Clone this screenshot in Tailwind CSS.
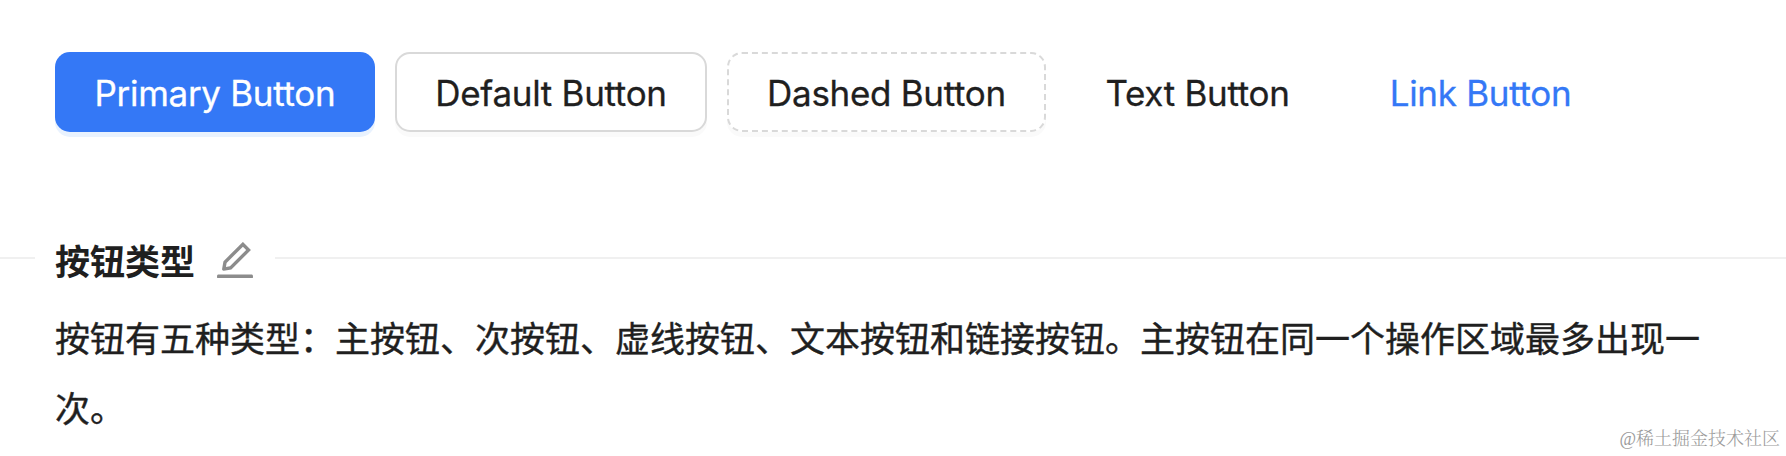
<!DOCTYPE html>
<html lang="zh-CN">
<head>
<meta charset="utf-8">
<title>按钮类型</title>
<script src="https://cdn.jsdelivr.net/npm/@tailwindcss/browser@4"></script>
</head>
<body class="relative h-[456px] overflow-hidden bg-white font-['Inter','Noto_Sans_CJK_SC',sans-serif] text-[35px] text-[#1f1f1f]">
  <div class="flex gap-5 pl-[55px] pt-[52px] whitespace-nowrap leading-[80px] tracking-[-0.3px] [-webkit-text-stroke:0.3px_currentColor]">
    <button class="flex h-20 w-80 items-center justify-center rounded-[15px] bg-[#3478f6] pt-[2px] text-white shadow-[0_5px_0_#e9f2fe]">Primary Button</button>
    <button class="flex h-20 w-[312px] items-center justify-center rounded-[15px] border-2 border-[#d9d9d9] bg-white pt-[2px] shadow-[0_5px_0_#fafafa]">Default Button</button>
    <button class="flex h-20 w-[319px] items-center justify-center rounded-[15px] border-2 border-dashed border-[#d9d9d9] bg-white pt-[2px] shadow-[0_5px_0_#fafafa]">Dashed Button</button>
    <button class="flex h-20 w-[263px] items-center justify-center pt-[2px]">Text Button</button>
    <button class="flex h-20 w-[263px] items-center justify-center pt-[2px] text-[#3478f6]">Link Button</button>
  </div>
  <div class="mt-[98px] flex h-[55px] items-start">
    <div class="mt-[27px] h-[2px] w-[35px] bg-[#f0f0f0]"></div>
    <h2 class="ml-5 mt-[5px] w-[140px] whitespace-nowrap font-bold leading-[55px]">按钮类型</h2>
    <svg class="ml-[17px] mt-[7px] size-[46px] shrink-0" viewBox="0 0 1024 1024" fill="#8c8c8c"><path d="M257.7 752c2 0 4-.2 6-.5L431.9 722c2-.4 3.9-1.3 5.3-2.8l423.9-423.9a9.96 9.96 0 000-14.1L694.9 114.9c-1.9-1.9-4.4-2.9-7.1-2.9s-5.2 1-7.1 2.9L256.8 538.8c-1.5 1.5-2.4 3.3-2.8 5.3l-29.5 168.2a33.5 33.5 0 009.4 29.8c6.6 6.4 14.9 9.9 23.8 9.9zm67.4-174.4L687.8 215l73.3 73.3-362.7 362.6-88.9 15.7 15.6-89zM880 836H144c-17.7 0-32 14.3-32 32v36c0 4.4 3.6 8 8 8h784c4.4 0 8-3.6 8-8v-36c0-17.7-14.3-32-32-32z"/></svg>
    <div class="ml-[17px] mt-[27px] h-[2px] flex-1 bg-[#f0f0f0]"></div>
  </div>
  <p class="ml-[55px] mt-[19px] whitespace-nowrap leading-[70px] [-webkit-text-stroke:0.4px_#1f1f1f]">按钮有五种类型：主按钮、次按钮、虚线按钮、文本按钮和链接按钮。主按钮在同一个操作区域最多出现一<br>次。</p>
  <div class="absolute bottom-[5px] right-[6px] whitespace-nowrap font-['Liberation_Serif','Noto_Serif_CJK_SC','Noto_Sans_CJK_SC',serif] text-[18px] font-light leading-[24px] text-[#9a9a9a]">@稀土掘金技术社区</div>
</body>
</html>
